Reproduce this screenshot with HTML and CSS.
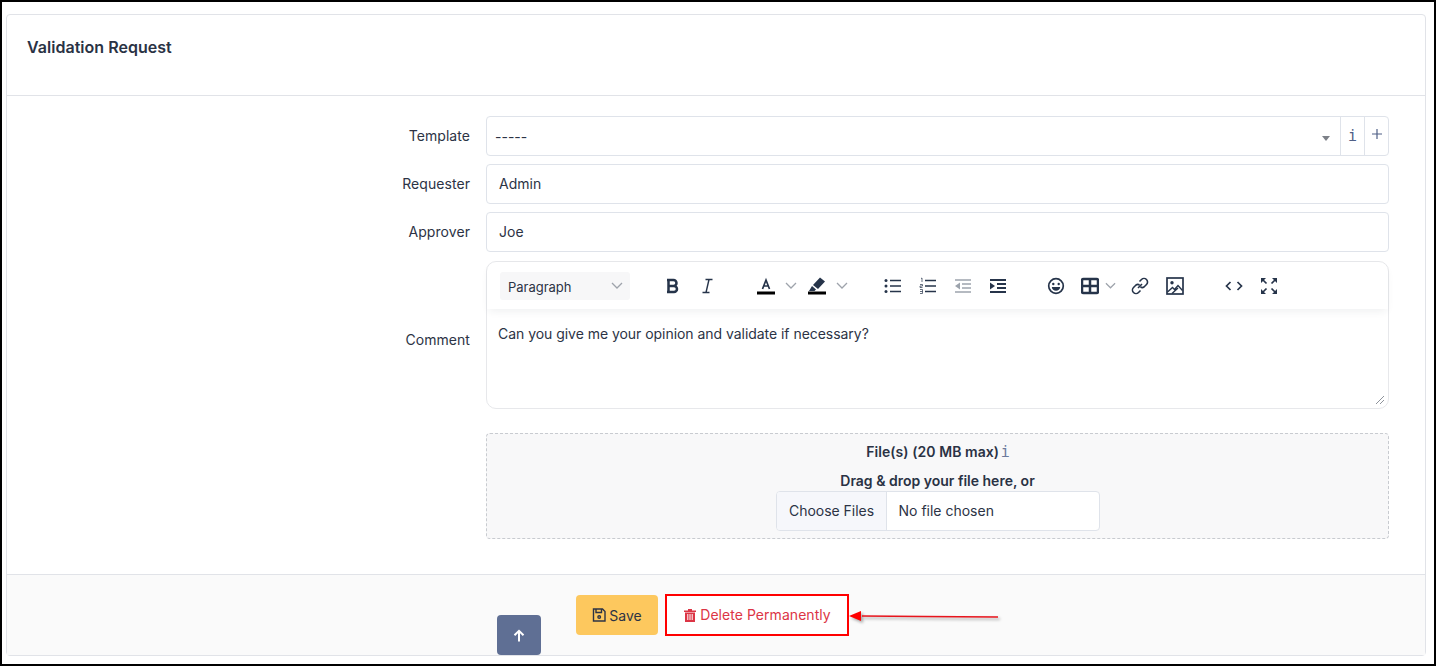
FILE: index.html
```html
<!DOCTYPE html>
<html lang="en">
<head>
<meta charset="utf-8">
<title>Validation Request</title>
<link rel="stylesheet" href="styles.css">
</head>
<body>
<div class="frame">
  <section class="card">
    <header class="card-header"><h1>Validation Request</h1></header>
    <form class="form">
      <label class="lbl">Template</label>
      <div class="input-group">
        <div class="select-box"><span>-----</span><i class="caret"></i></div>
        <span class="addon addon-i">i</span>
        <span class="addon addon-plus"><svg viewBox="0 0 10 10"><path d="M5 0v10M0 5h10"/></svg></span>
      </div>
      <label class="lbl">Requester</label>
      <div class="input">Admin</div>
      <label class="lbl">Approver</label>
      <div class="input">Joe</div>
      <label class="lbl lbl-comment">Comment</label>
      <div class="editor">
        <div class="toolbar">
          <div class="para"><span class="para-text">Paragraph</span><svg class="chev-s" viewBox="0 0 12 7"><path d="M1 1l5 5 5-5"/></svg></div>
          <span class="tool ml-b"><svg viewBox="0 0 18 18" class="ic"><path class="thick" d="M4.500 3v12M3 3h6.500a3 3 0 0 1 0 6H4.500M4.500 9h5.500a3 3 0 0 1 0 6H3"/></svg></span>
          <span class="tool"><svg viewBox="0 0 18 18" class="ic"><path class="thin" d="M6.500 2.500h7M3.500 15.500h7M10 2.500l-3 13"/></svg></span>
          <span class="split-ic ml-a"><svg viewBox="0 0 18 18" class="ic"><path class="med" d="M5.500 12L9 3l3.500 9M6.700 9h4.600"/><rect x="0" y="14.500" width="18" height="3" class="fill-k"/></svg></span>
          <svg class="chev" viewBox="0 0 12 7"><path d="M1 1l5 5 5-5"/></svg>
          <span class="split-ic ml-pen"><svg viewBox="0 0 18 18" class="ic"><path class="fill" d="M12 .5l5 4-7 7.500-5-4zM4 9l4 3.500L6.500 14H1z"/><rect x="0" y="14.500" width="18" height="3" class="fill-k"/></svg></span>
          <svg class="chev" viewBox="0 0 12 7"><path d="M1 1l5 5 5-5"/></svg>
          <span class="tool ml-list"><svg viewBox="0 0 18 18" class="ic"><path class="med" d="M6 3.500h11M6 9h11M6 14.500h11"/><circle cx="2" cy="3.500" r="1.500" class="fill"/><circle cx="2" cy="9" r="1.500" class="fill"/><circle cx="2" cy="14.500" r="1.500" class="fill"/></svg></span>
          <span class="tool"><svg viewBox="0 0 18 18" class="ic"><path class="med" d="M6 3.500h11M6 9h11M6 14.500h11"/><path class="num" d="M2 1.500l1-.5v4M1 7.500h2.500v1.500H1v1.500h2.500M1 12.500h2.500v4H1M1 14.500h2.500"/></svg></span>
          <span class="tool muted"><svg viewBox="0 0 18 18" class="ic"><path class="med" d="M1 3h16M8 7h9M8 11h9M1 15h16"/><path class="fill" d="M6 5.500v7L1 9z"/></svg></span>
          <span class="tool"><svg viewBox="0 0 18 18" class="ic"><path class="thick-2" d="M1 3h16M8 7h9M8 11h9M1 15h16"/><path class="fill" d="M1 5.500v7L6 9z"/></svg></span>
          <span class="tool ml-emoji"><svg viewBox="0 0 18 18" class="ic"><circle cx="9" cy="9" r="7.300" class="med"/><circle cx="6.300" cy="7" r="1.200" class="fill"/><circle cx="11.700" cy="7" r="1.200" class="fill"/><path class="fill" d="M4.800 10h8.400c-.3 2.500-2 3.800-4.200 3.800S5.100 12.500 4.800 10z"/></svg></span>
          <span class="split-ic ml-table"><svg viewBox="0 0 18 18" class="ic"><rect x="1" y="2" width="16" height="14" rx="1.500" class="thick"/><path class="thick" d="M1 9h16M9 2v14"/></svg></span>
          <svg class="chev chev-t" viewBox="0 0 12 7"><path d="M1 1l5 5 5-5"/></svg>
          <span class="tool ml-link"><svg viewBox="0 0 18 18" class="ic"><path class="link" d="M7 11l4-4M8.500 4.500l2-2a3.200 3.200 0 0 1 5 5l-2.500 2.500a3 3 0 0 1-3.500 0M9.500 13.500l-2 2a3.200 3.200 0 0 1-5-5L5 8a3 3 0 0 1 3.500 0"/></svg></span>
          <span class="tool"><svg viewBox="0 0 18 18" class="ic"><rect x="1" y="1" width="16" height="16" class="med"/><circle cx="6" cy="5.800" r="1.700" class="fill"/><path class="thin" d="M1.500 15l5-4.500 2 2 3.500-4 4.500 5M6 16.500l6-5.500"/></svg></span>
          <span class="tool ml-code"><svg viewBox="0 0 18 18" class="ic"><path class="med" d="M5.500 5L1.500 9l4 4M12.500 5l4 4-4 4"/></svg></span>
          <span class="tool"><svg viewBox="0 0 18 18" class="ic"><path class="fill" d="M1 1h5L1 6zM17 1v5l-5-5zM1 17v-5l5 5zM17 17h-5l5-5z"/><path class="med" d="M3 3l3.500 3.500M15 3l-3.500 3.500M3 15l3.500-3.500M15 15l-3.500-3.500"/></svg></span>
        </div>
        <div class="editor-body">Can you give me your opinion and validate if necessary?
          <svg class="grip" viewBox="0 0 10 10"><path d="M1 9l8-8M5 9l4-4"/></svg>
        </div>
      </div>
      <div class="dropzone">
        <div class="dz-title">File(s) (20 MB max) <span class="dz-i">i</span></div>
        <div class="dz-drag">Drag &amp; drop your file here, or</div>
        <div class="file"><span class="file-btn">Choose Files</span><span class="file-name">No file chosen</span></div>
      </div>
    </form>
    <footer class="card-footer">
      <a class="top-btn"><svg viewBox="0 0 12 12"><path d="M6 12V1.500M1.500 5.800L6 1.300l4.500 4.500"/></svg></a>
      <button type="button" class="btn save"><svg viewBox="0 0 14 14"><path d="M1.500 1h9l2.500 2.500V13H1.500z"/><path d="M4 1v3.500h5.500V1"/><circle cx="7.200" cy="9" r="1.300"/></svg>Save</button>
      <button type="button" class="btn del"><svg viewBox="0 0 14 14"><path class="tr" d="M1 2.500h12v1.500H1zM5 2.500V1h4v1.500zM2 4.500h10V14H2z"/><path class="gap" d="M4.800 6v6M7 6v6M9.200 6v6"/></svg>Delete Permanently</button>
      <svg class="arrow" viewBox="0 0 160 20">
        <path class="arrow-line" d="M14 7l60 .5 76 .5"/>
        <path class="arrow-head" d="M1 7l12-5v10z"/>
      </svg>
    </footer>
  </section>
</div>
</body>
</html>
```

FILE: styles.css
```css
* { box-sizing: border-box; }
html, body { margin: 0; height: 100%; }
body { font-family: Inter, "Liberation Sans", sans-serif; font-size: 14px; color: #2c3345; background: #fff; }
.frame { width: 1436px; height: 666px; border: 2px solid #000; padding: 12px 8px 7px 4px; overflow: hidden; }
.card { height: 642px; width: 1420px; border: 1px solid #e1e3e8; border-radius: 4px; display: flex; flex-direction: column; }
.card-header { height: 81px; border-bottom: 1px solid #e1e3e8; padding: 22px 20px 0; flex: none; }
.card-header h1 { margin: 0; font-size: 16px; line-height: 20px; font-weight: 600; color: #2a3244; letter-spacing: .03px; }
.form { flex: 1; display: grid; grid-template-columns: 463px 903px; column-gap: 16px; align-content: start; padding-top: 20px; row-gap: 8px; }
.lbl { text-align: right; align-self: center; line-height: 20px; color: #2c3345; letter-spacing: .06px; }
.lbl-comment { padding-top: 10px; }
.input, .input-group { height: 40px; border: 1px solid #dfe3ea; border-radius: 4px; background: #fff; }
.input { padding: 0 12px; line-height: 38px; }
.input-group { display: flex; }
.select-box { flex: 1; display: flex; align-items: center; justify-content: space-between; padding: 0 10px 0 9px; }
.select-box span { margin-left: -1px; }
.caret { width: 0; height: 0; border: 4px solid transparent; border-top: 5px solid #7d8188; border-bottom: 0; margin-top: 4px; }
.addon { width: 24px; border-left: 1px solid #dfe3ea; text-align: center; color: #4f5f86; line-height: 38px; }
.addon-i { font-family: "DejaVu Sans Mono", monospace; font-size: 15px; }
.addon-plus { display: flex; align-items: flex-start; justify-content: center; padding-top: 12px; }
.addon-plus svg { width: 10px; height: 10px; stroke: #4f5f86; stroke-width: 1.200; fill: none; }
.editor { height: 148px; border: 1.500px solid #e7e8eb; border-radius: 10px; margin-top: 1px; display: flex; flex-direction: column; }
.toolbar { height: 47px; flex: none; display: flex; align-items: center; padding: 0 0 0 13px; box-shadow: 0 4px 8px -2px rgba(40, 50, 70, .08); border-radius: 10px 10px 0 0; }
.para { width: 130px; height: 28px; background: #f7f7f8; border-radius: 3px; display: flex; align-items: center; justify-content: space-between; padding: 0 7px 0 8px; font-size: 13px; }
.para-text { padding-top: 2px; letter-spacing: -.02px; }
.chev-s { width: 12px; height: 7px; }
.chev, .chev-s { fill: none; stroke: #9ea3ab; stroke-width: 1.300; }
.chev { width: 12px; height: 7px; margin-left: 10px; flex: none; }
.chev-t { width: 11px; margin-left: 6px; }
.tool { width: 35px; display: flex; justify-content: center; flex: none; }
.split-ic { width: 18px; display: flex; flex: none; }
.ic { width: 18px; height: 18px; display: block; }
.ic .thick, .ic .thick-2, .ic .med, .ic .thin, .ic .link, .ic .num { fill: none; stroke: #26344a; }
.ic .thick { stroke-width: 2.500; }
.ic .thick-2 { stroke-width: 2; }
.ic .med { stroke-width: 1.700; }
.ic .link { stroke-width: 1.600; }
.ic .thin { stroke-width: 1.400; }
.ic .num { stroke-width: .7; }
.ic .fill { fill: #26344a; }
.ic .fill-k { fill: #000; }
.muted { opacity: .45; }
.ml-b { margin-left: 25px; }
.ml-a { margin-left: 32px; }
.ml-pen { margin-left: 11px; }
.ml-list { margin-left: 27px; }
.ml-emoji { margin-left: 23.500px; }
.ml-table { margin-left: 7.500px; }
.ml-link { margin-left: 6.500px; }
.ml-code { margin-left: 24px; }
.editor-body { flex: 1; position: relative; padding: 16px 11px 0; line-height: 18px; letter-spacing: -.04px; }
.grip { position: absolute; right: 3px; bottom: 3px; width: 10px; height: 10px; fill: none; stroke: #8e939b; stroke-width: 1; }
.dropzone { grid-column: 2; height: 106px; margin-top: 16px; border: 1px dashed #c8cbd0; border-radius: 4px; background: #f8f8f9; display: flex; flex-direction: column; align-items: center; padding-top: 8px; }
.dz-title { font-weight: 600; line-height: 20px; color: #2a3244; letter-spacing: .06px; padding-left: 1px; }
.dz-i { font-family: "DejaVu Sans Mono", monospace; font-weight: 400; font-size: 15px; color: #6c7a9c; margin-left: -2px; }
.dz-drag { font-weight: 600; line-height: 20px; margin-top: 9px; color: #2a3244; }
.file { width: 324px; height: 40px; margin-top: 0; border: 1px solid #dfe3ea; border-radius: 4px; background: #fff; display: flex; line-height: 38px; }
.file-btn { width: 110px; background: #f6f7fb; border-right: 1px solid #dfe3ea; text-align: center; border-radius: 3px 0 0 3px; padding-left: 1px; letter-spacing: -.03px; }
.file-name { padding-left: 12px; }
.card-footer { height: 81px; flex: none; position: relative; border-top: 1px solid #e1e3e8; background: #fafafa; display: flex; align-items: flex-start; padding: 19px 0 0 569px; gap: 7px; }
.btn { font: inherit; height: 40px; border-radius: 4px; display: flex; align-items: center; justify-content: center; gap: 3px; padding: 0; cursor: pointer; }
.btn svg { width: 14px; height: 14px; flex: none; }
.save { width: 82px; background: #fdc85e; border: 0; color: #2c3345; margin-top: 1px; }
.save svg { fill: none; stroke: #2c3345; stroke-width: 1.400; }
.del { width: 184px; height: 42px; background: #fff; color: #dc3545; border: 2px solid #f00; border-radius: 0; letter-spacing: .05px; padding-bottom: 1px; }
.del .tr { fill: #dc3545; }
.del .gap { fill: none; stroke: #fff; stroke-width: 1; }
.top-btn { position: absolute; left: 490px; top: 40px; width: 44px; height: 40px; background: #5f6f94; border-radius: 4px; display: flex; align-items: center; justify-content: center; }
.top-btn svg { width: 12px; height: 13px; fill: none; stroke: #fff; stroke-width: 2; }
.arrow { position: absolute; left: 841px; top: 34px; width: 160px; height: 20px; filter: drop-shadow(2px 2px 1.500px rgba(0, 0, 0, .35)); }
.arrow-line { fill: none; stroke: #e8141c; stroke-width: 1.500; }
.arrow-head { fill: #f00; }
```
